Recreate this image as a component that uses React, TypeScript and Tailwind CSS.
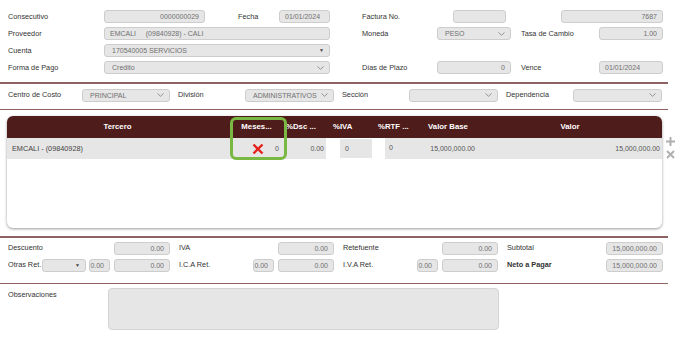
import React from "react";

const inp =
	"h-[13px] rounded-[3px] border border-[#cdcdcd] bg-[#e6e6e6] text-[#707070] text-[7px] px-[5px] flex items-center leading-none shrink-0 whitespace-pre";

function Chevron() {
	return (
		<svg width="7" height="4" viewBox="0 0 7 4" className="ml-auto">
			<path d="M0.5 0.5 L3.5 3.3 L6.5 0.5" fill="none" stroke="#8a8a8a" strokeWidth="0.9" />
		</svg>
	);
}

function Input({ w, value = "", align = "right" }: { w: string; value?: string; align?: "left" | "right" }) {
	return (
		<div className={`${inp} ${w} ${align === "right" ? "justify-end" : "justify-start"}`}>{value}</div>
	);
}

function Select({ w, value = "", tri = false }: { w: string; value?: string; tri?: boolean }) {
	return (
		<div className={`${inp} ${w}`}>
			<span className="pl-[2px]">{value}</span>
			{tri ? <span className="ml-auto text-[5px] text-[#444]">▼</span> : <Chevron />}
		</div>
	);
}

function Label({ w, children, bold = false }: { w: string; children: React.ReactNode; bold?: boolean }) {
	return (
		<div className={`${w} shrink-0 text-[7.3px] text-[#333] leading-none ${bold ? "font-bold" : ""}`}>{children}</div>
	);
}

function Line() {
	return <div className="w-[668px] h-[1.5px] bg-[#8f6262]" />;
}

function RedX() {
	return (
		<svg width="12" height="12" viewBox="0 0 12 12">
			<path d="M1.5 1.5 L10.5 10.5 M10.5 1.5 L1.5 10.5" stroke="#e3231c" strokeWidth="2.4" strokeLinecap="butt" />
		</svg>
	);
}

export default function App() {
	return (
		<div
			className="w-[688px] h-[355px] bg-white overflow-hidden"
			style={{ fontFamily: '"Liberation Sans", Arial, sans-serif' }}
		>
			{/* cabecera */}
			<div className="flex pt-[10px]">
				<div className="flex flex-col gap-[4px] pl-[8px] shrink-0">
					<div className="flex items-center">
						<Label w="w-[96px]">Consecutivo</Label>
						<Input w="w-[101px]" value="0000000029" />
						<Label w="w-[74px] pl-[33px]">Fecha</Label>
						<Input w="w-[51px]" value="01/01/2024" align="left" />
					</div>
					<div className="flex items-center">
						<Label w="w-[96px]">Proveedor</Label>
						<Input w="w-[226px]" value="EMCALI     (09840928) - CALI" align="left" />
					</div>
					<div className="flex items-center">
						<Label w="w-[96px]">Cuenta</Label>
						<Select w="w-[226px]" value="170540005 SERVICIOS" tri />
					</div>
					<div className="flex items-center">
						<Label w="w-[96px]">Forma de Pago</Label>
						<Select w="w-[226px]" value="Credito" />
					</div>
				</div>
				<div className="flex flex-col gap-[4px] pl-[32px] shrink-0">
					<div className="flex items-center">
						<Label w="w-[91px]">Factura No.</Label>
						<Input w="w-[53px]" />
						<div className="w-[55px] shrink-0" />
						<Input w="w-[102px]" value="7687" />
					</div>
					<div className="flex items-center">
						<Label w="w-[75px]">Moneda</Label>
						<Select w="w-[74px]" value="PESO" />
						<Label w="w-[88px] pl-[10px]">Tasa de Cambio</Label>
						<Input w="w-[64px]" value="1.00" />
					</div>
					<div className="h-[13px]" />
					<div className="flex items-center">
						<Label w="w-[75px]">Días de Plazo</Label>
						<Input w="w-[74px]" value="0" />
						<Label w="w-[88px] pl-[10px]">Vence</Label>
						<Input w="w-[64px]" value="01/01/2024" align="left" />
					</div>
				</div>
			</div>

			<div className="mt-[8px]">
				<Line />
			</div>

			{/* centro de costo */}
			<div className="flex items-center pl-[8px] mt-[5px]">
				<Label w="w-[74px]">Centro de Costo</Label>
				<Select w="w-[88px]" value="PRINCIPAL" />
				<Label w="w-[75px] pl-[8px]">División</Label>
				<Select w="w-[89px]" value="ADMINISTRATIVOS" />
				<Label w="w-[75px] pl-[8px]">Sección</Label>
				<Select w="w-[89px]" />
				<Label w="w-[75px] pl-[8px]">Dependencia</Label>
				<Select w="w-[89px]" />
			</div>

			<div className="mt-[7px]">
				<Line />
			</div>

			{/* tabla */}
			<div className="flex mt-[6px] ml-[7px]">
				<div className="relative w-[655px] h-[112px] rounded-[6px] bg-white shadow-[0_1px_3px_rgba(0,0,0,0.4)]">
					<div className="flex h-[22px] items-center bg-[#4f1c1c] rounded-t-[6px] text-white font-bold text-[7.8px] leading-none">
						<div className="w-[221px] text-center">Tercero</div>
						<div className="w-[57px] text-center">Meses...</div>
						<div className="w-[43px] pl-[1px]">%Dsc ...</div>
						<div className="w-[46px] pl-[5px]">%IVA</div>
						<div className="w-[44px] pl-[4px]">%RTF ...</div>
						<div className="w-[60px] text-center">Valor Base</div>
						<div className="flex-1 text-center">Valor</div>
					</div>
					<div className="flex h-[21px] text-[7px] text-[#555] leading-none">
						<div className="flex w-[319px] bg-[#e6e6e6] items-center">
							<div className="w-[221px] pl-[5px] text-[#444] text-[7.3px]">EMCALI - (09840928)</div>
							<div className="w-[57px] flex items-center justify-end pr-[6px] gap-[11px]">
								<RedX />
								<span>0</span>
							</div>
							<div className="w-[41px] text-right pr-[2px]">0.00</div>
						</div>
						<div className="w-[14px]" />
						<div className="w-[32px] h-[19px] mt-[1px] bg-[#e6e6e6] pl-[5px] pt-[6px]">0</div>
						<div className="w-[13px]" />
						<div className="flex flex-1 bg-[#e6e6e6] items-center">
							<div className="w-[33px] pl-[4px] -mt-[2px]">0</div>
							<div className="w-[60px] text-right pr-[3px]">15,000,000.00</div>
							<div className="flex-1 text-right pr-[2px]">15,000,000.00</div>
						</div>
					</div>
					<div className="absolute left-[223px] top-[1px] w-[57px] h-[43px] rounded-[6px] border-[3px] border-[#7ab844]" />
				</div>
				<div className="flex flex-col ml-[4px] pt-[21px] gap-[4px]">
					<svg width="9" height="9" viewBox="0 0 9 9">
						<path d="M4.5 0 V9 M0 4.5 H9" stroke="#b0b0b0" strokeWidth="2" />
					</svg>
					<svg width="9" height="9" viewBox="0 0 9 9">
						<path d="M1 1 L8 8 M8 1 L1 8" stroke="#b0b0b0" strokeWidth="2" />
					</svg>
				</div>
			</div>

			<div className="mt-[8px]">
				<Line />
			</div>

			{/* totales */}
			<div className="flex flex-col gap-[4px] pl-[8px] mt-[4px]">
				<div className="flex items-center">
					<Label w="w-[106px]">Descuento</Label>
					<Input w="w-[56px]" value="0.00" />
					<Label w="w-[108px] pl-[9px]">IVA</Label>
					<Input w="w-[56px]" value="0.00" />
					<Label w="w-[108px] pl-[9px]">Retefuente</Label>
					<Input w="w-[56px]" value="0.00" />
					<Label w="w-[108px] pl-[9px]">Subtotal</Label>
					<Input w="w-[57px]" value="15,000,000.00" />
				</div>
				<div className="flex items-center">
					<Label w="w-[34px]">Otras Ret.</Label>
					<Select w="w-[44px]" tri />
					<div className="w-[3px]" />
					<Input w="w-[21px]" value="0.00" />
					<div className="w-[4px]" />
					<Input w="w-[56px]" value="0.00" />
					<Label w="w-[83px] pl-[9px]">I.C.A Ret.</Label>
					<Input w="w-[21px]" value="0.00" />
					<div className="w-[4px]" />
					<Input w="w-[56px]" value="0.00" />
					<Label w="w-[83px] pl-[9px]">I.V.A Ret.</Label>
					<Input w="w-[21px]" value="0.00" />
					<div className="w-[4px]" />
					<Input w="w-[56px]" value="0.00" />
					<Label w="w-[108px] pl-[9px]" bold>
						Neto a Pagar
					</Label>
					<Input w="w-[57px]" value="15,000,000.00" />
				</div>
			</div>

			<div className="mt-[11px]">
				<Line />
			</div>

			{/* observaciones */}
			<div className="flex pl-[8px] mt-[4px]">
				<div className="w-[100px] pt-[3px]">
					<Label w="w-[100px]">Observaciones</Label>
				</div>
				<div className="w-[391px] h-[42px] rounded-[4px] border border-[#d4d4d4] bg-[#e6e6e6]" />
			</div>
		</div>
	);
}
